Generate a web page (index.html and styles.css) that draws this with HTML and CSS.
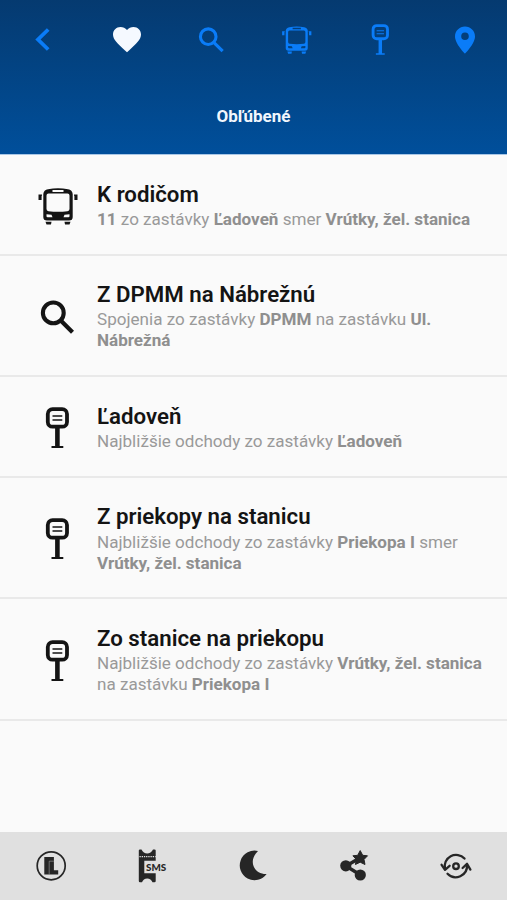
FILE: index.html
```html
<!DOCTYPE html>
<html lang="sk">
<head>
    <meta charset="UTF-8">
    <meta name="viewport" content="width=device-width, initial-scale=1.0">
    <title>Obľúbené</title>
    <link rel="stylesheet" href="styles.css">
</head>
<body>
    <!-- Shared icons -->
    <svg class="sprite">
        <symbol id="bus" viewBox="0 0 48 48">
            <path fill="currentColor" fill-rule="evenodd" d="M15 8.2Q25 6.3 35 8.2Q39.3 9 39.7 13V36Q39.7 39.6 36 39.6H14Q10.3 39.6 10.3 36V13Q10.7 9 15 8.2ZM19.5 9.1V10.9H30.5V9.1ZM15.5 12.6Q13.5 12.6 13.5 14.6V28Q13.5 30 15.5 30.3Q25 31.4 34.5 30.3Q36.5 30 36.5 28V14.6Q36.5 12.6 34.5 12.6ZM13.5 33.2V35.2Q13.5 36.2 14.7 36.2H19.5L18.5 33.8ZM36.5 33.2V35.2Q36.5 36.2 35.3 36.2H30.5L31.5 33.8Z"/>
            <path fill="currentColor" d="M5.5 13.5H9V14.8H8.6V19H5.5ZM44.5 13.5H41V14.8H41.4V19H44.5ZM12.5 40.7H18.5L18 43.6H13.5ZM31.5 40.7H37.5L36.5 43.6H32Z"/>
        </symbol>
        <symbol id="search" viewBox="0 0 48 48">
            <circle cx="20.3" cy="20.9" r="10.4" fill="none" stroke="currentColor" stroke-width="4.1"/>
            <path d="M28 28.7L39.5 40.2" stroke="currentColor" stroke-width="4.2"/>
        </symbol>
        <symbol id="stop" viewBox="0 0 48 48">
            <rect x="14.8" y="6.1" width="19.2" height="17.6" rx="4.8" fill="none" stroke="currentColor" stroke-width="3.8"/>
            <path d="M19.5 13H29.3M19.5 17H29.3" stroke="currentColor" stroke-width="1.6"/>
            <path fill="currentColor" d="M22.1 25H26.7V43H30.3V45H18.5V43H22.1Z"/>
        </symbol>
    </svg>

    <header class="header">
        <nav class="tabs">
            <a class="tab"><svg class="icon" viewBox="0 0 36 36"><path d="M24.2 8.5L14 18.5L24.2 28.5" fill="none" stroke="currentColor" stroke-width="3.8"/></svg></a>
            <a class="tab active"><svg class="icon" viewBox="0 0 36 36"><path fill="currentColor" d="M18 31.2L16 29.4C8.7 22.8 4 18.6 4 13.6C4 9.2 7.2 6 11.5 6C14 6 16.4 7.2 18 9C19.6 7.2 22 6 24.5 6C28.8 6 32 9.2 32 13.6C32 18.6 27.3 22.8 20 29.4Z"/></svg></a>
            <a class="tab"><svg class="icon"><use href="#search"/></svg></a>
            <a class="tab"><svg class="icon"><use href="#bus"/></svg></a>
            <a class="tab"><svg class="icon"><use href="#stop"/></svg></a>
            <a class="tab"><svg class="icon" viewBox="0 0 36 36"><path fill="currentColor" fill-rule="evenodd" d="M18 5.6C12.4 5.6 8 10 8 15.4C8 22.7 18 32.6 18 32.6S28 22.7 28 15.4C28 10 23.6 5.6 18 5.6ZM18 19A3.8 3.8 0 1 1 18 11.4A3.8 3.8 0 1 1 18 19Z"/></svg></a>
        </nav>
        <h1 class="title">Obľúbené</h1>
    </header>

    <main class="list">
        <div class="item">
            <svg class="item-icon"><use href="#bus"/></svg>
            <div class="item-text">
                <h2>K rodičom</h2>
                <p><b>11</b> zo zastávky <b>Ľadoveň</b> smer <b>Vrútky, žel. stanica</b></p>
            </div>
        </div>
        <div class="item">
            <svg class="item-icon"><use href="#search"/></svg>
            <div class="item-text">
                <h2>Z DPMM na Nábrežnú</h2>
                <p>Spojenia zo zastávky <b>DPMM</b> na zastávku <b>Ul. Nábrežná</b></p>
            </div>
        </div>
        <div class="item">
            <svg class="item-icon"><use href="#stop"/></svg>
            <div class="item-text">
                <h2>Ľadoveň</h2>
                <p>Najbližšie odchody zo zastávky <b>Ľadoveň</b></p>
            </div>
        </div>
        <div class="item">
            <svg class="item-icon"><use href="#stop"/></svg>
            <div class="item-text">
                <h2>Z priekopy na stanicu</h2>
                <p>Najbližšie odchody zo zastávky <b>Priekopa I</b> smer <b>Vrútky, žel. stanica</b></p>
            </div>
        </div>
        <div class="item">
            <svg class="item-icon"><use href="#stop"/></svg>
            <div class="item-text">
                <h2>Zo stanice na priekopu</h2>
                <p>Najbližšie odchody zo zastávky <b>Vrútky, žel. stanica</b> na zastávku <b>Priekopa I</b></p>
            </div>
        </div>
    </main>

    <footer class="footer">
        <a class="tool">
            <svg viewBox="0 0 36 36">
                <circle cx="18.2" cy="17.8" r="14" fill="none" stroke="currentColor" stroke-width="1.7"/>
                <path fill="currentColor" d="M11.3 9H20.9V22.3H25.2V26.5H11.3Z"/>
                <path d="M20.9 13.2H16.2V26.5" fill="none" stroke="#a0a0a0" stroke-width=".6"/>
            </svg>
        </a>
        <a class="tool">
            <svg viewBox="0 0 36 36">
                <path fill="currentColor" d="M4.8 2.5Q4.8 1.5 6 1.5H7.5Q9.5 5.5 13.2 5.5T19 1.5H20.5Q21.7 1.5 21.7 2.5V12.7H10.3V25.2H21.7V33Q21.7 34.2 20.5 34.2H18.5Q17 30.4 13.2 30.4T8 34.2H6Q4.8 34.2 4.8 33Z"/>
                <path d="M5.5 8.6H21.7" stroke="#e0e0e0" stroke-width="1.1" stroke-dasharray="1.3 .9"/>
                <text x="12" y="22.6" class="sms">SMS</text>
            </svg>
        </a>
        <a class="tool">
            <svg viewBox="0 0 36 36"><path fill="currentColor" d="M23 3A14.8 14.8 0 1 0 31.6 26C20 26.5 12 14 23 3Z"/></svg>
        </a>
        <a class="tool">
            <svg viewBox="0 0 36 36">
                <path d="M23.5 9.5L9 18L23.5 27" fill="none" stroke="currentColor" stroke-width="3.4"/>
                <circle cx="8.8" cy="17.8" r="5.6" fill="currentColor"/>
                <circle cx="23.3" cy="27" r="5.6" fill="currentColor"/>
                <path fill="currentColor" stroke="currentColor" stroke-width="1" stroke-linejoin="round" d="M23.2 2.6L25.7 7.3L30.5 7.8L27 11.5L28 16.5L23.2 14.2L18.4 16.5L19.4 11.5L15.9 7.8L20.7 7.3Z"/>
            </svg>
        </a>
        <a class="tool">
            <svg viewBox="0 0 36 36" fill="none" stroke="currentColor" stroke-width="2.3" stroke-linecap="round" stroke-linejoin="round">
                <circle cx="18" cy="18.2" r="2.8"/>
                <path d="M26.5 10.6A11.4 11.4 0 0 0 7 21"/>
                <path d="M9.5 25.8A11.4 11.4 0 0 0 29 17"/>
                <path d="M3.6 16.8L7 21.8L11.6 17.8M24.6 20L29 15.8L32.4 21.6"/>
            </svg>
        </a>
    </footer>
</body>
</html>
```
FILE: styles.css
```css
* {
    box-sizing: border-box;
}
body {
    margin: 0;
    height: 100vh;
    display: flex;
    flex-direction: column;
    font-family: Roboto, "Noto Sans", sans-serif;
    background: #fafafa;
    color: #141414;
}
h1, h2, p {
    margin: 0;
}
.sprite {
    display: none;
}
.header {
    height: 155px;
    background: linear-gradient(#053a70, #004f9b);
    border-bottom: 1px solid #a9c7e6;
}
.tabs {
    display: grid;
    grid-template-columns: repeat(6, 1fr);
    padding-top: 21px;
}
.tab {
    display: flex;
    justify-content: center;
    color: #0a7cf8;
}
.tab.active {
    color: #f5f9ff;
}
.icon {
    width: 36px;
    height: 36px;
}
.title {
    margin-top: 48px;
    text-align: center;
    font-size: 17px;
    line-height: 22px;
    font-weight: 700;
    color: #f2f7fd;
}
.list {
    flex: 1;
}
.item {
    display: flex;
    align-items: center;
    padding: 24.6px 20px 23.8px 33px;
    border-bottom: 2px solid #e9e9e9;
}
.item-icon {
    flex: none;
    width: 48px;
    height: 48px;
    margin-right: 16px;
}
.item h2 {
    font-size: 22.25px;
    line-height: 28px;
    font-weight: 600;
}
.item p {
    margin-top: 1.2px;
    font-size: 17.07px;
    line-height: 21px;
    color: #999;
}
.item b {
    font-weight: 700;
    color: #8f8f8f;
}
.footer {
    height: 68px;
    display: grid;
    grid-template-columns: repeat(5, 1fr);
    align-items: center;
    background: #e0e0e0;
    color: #262626;
}
.tool {
    display: flex;
    justify-content: center;
}
.tool svg {
    width: 36px;
    height: 36px;
    overflow: visible;
}
.sms {
    font-family: Lato, sans-serif;
    font-size: 9.8px;
    font-weight: 900;
    fill: currentColor;
}
```
